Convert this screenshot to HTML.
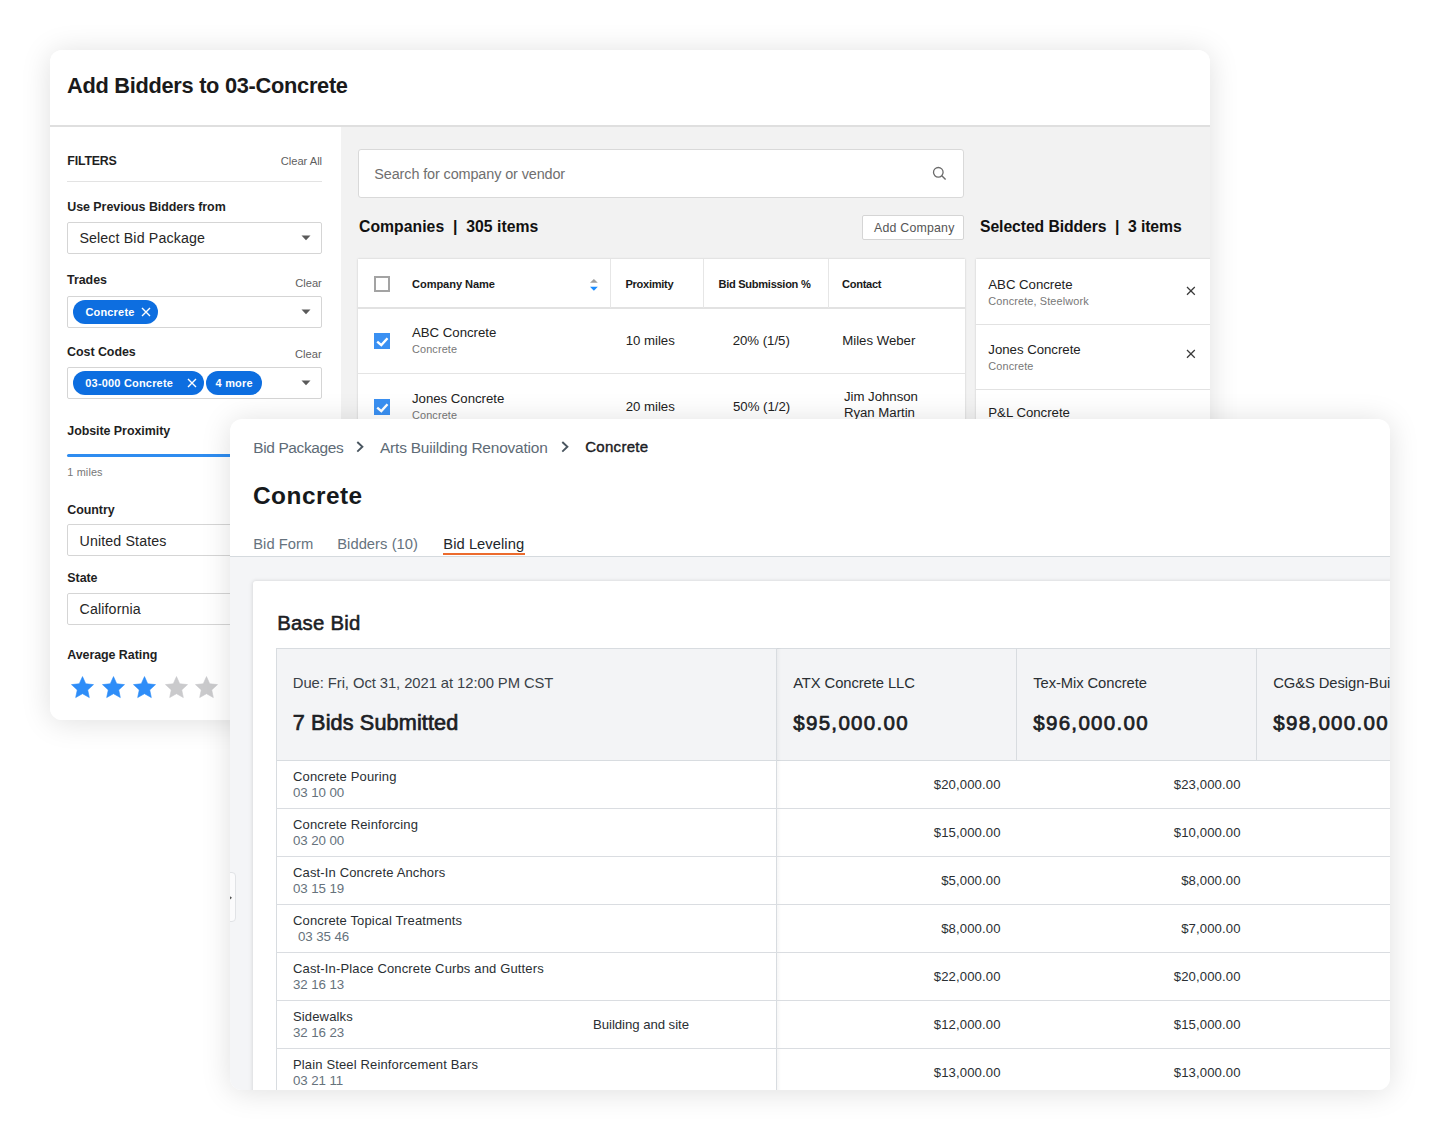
<!DOCTYPE html><html><head><meta charset="utf-8"><title>Bid Leveling</title><style>

*{margin:0;padding:0}
html,body{width:1440px;height:1140px;overflow:hidden;background:#fff}
body{position:relative;font-family:"Liberation Sans",sans-serif}
.panel{position:absolute;background:#fff;border-radius:12px;overflow:hidden}
.b{position:absolute;display:block}
.t{position:absolute;white-space:pre;line-height:1}

.h1{font-size:21.8px;letter-spacing:-0.29px;font-weight:700;color:#1a1a1a;}
.filt{font-size:12.41px;letter-spacing:-0.201px;font-weight:700;color:#1f1f1f;}
.clr{font-size:11.15px;letter-spacing:-0.013px;font-weight:400;color:#5f5f5f;}
.lbl{font-size:12.46px;letter-spacing:-0.06px;font-weight:700;color:#1f1f1f;}
.inp{font-size:14.22px;letter-spacing:0.129px;font-weight:400;color:#262626;}
.chip{font-size:10.98px;letter-spacing:0.203px;font-weight:700;color:#ffffff;}
.sect{font-size:15.75px;letter-spacing:-0.084px;font-weight:700;color:#111111;}
.srch{font-size:14.43px;letter-spacing:-0.116px;font-weight:400;color:#6f6f6f;}
.th{font-size:11.09px;letter-spacing:-0.294px;font-weight:700;color:#1a1a1a;}
.td{font-size:13.23px;letter-spacing:-0.019px;font-weight:400;color:#222222;}
.sub{font-size:10.88px;letter-spacing:0.134px;font-weight:400;color:#777777;}
.btn{font-size:12.35px;letter-spacing:0.214px;font-weight:400;color:#555555;}
.bc{font-size:15.47px;letter-spacing:-0.212px;font-weight:400;color:#5e6b76;}
.bca{font-size:15.03px;letter-spacing:0.29px;font-weight:400;color:#1c2024;}
.h2{font-size:24.4px;letter-spacing:0.492px;font-weight:700;color:#16191c;}
.tab{font-size:14.75px;letter-spacing:0.041px;font-weight:400;color:#66737e;}
.h3{font-size:20.35px;letter-spacing:0.219px;font-weight:400;color:#1c2024;-webkit-text-stroke:0.55px #1c2024;}
.due{font-size:14.8px;letter-spacing:-0.07px;font-weight:400;color:#3a4147;}
.big{font-size:21.64px;letter-spacing:0.135px;font-weight:400;color:#1c2024;-webkit-text-stroke:0.7px #1c2024;}
.bigm{font-size:20.53px;letter-spacing:1.317px;font-weight:400;color:#1c2024;-webkit-text-stroke:0.7px #1c2024;}
.vend{font-size:14.79px;letter-spacing:-0.084px;font-weight:400;color:#2a2f33;}
.row{font-size:13.01px;letter-spacing:0.147px;font-weight:400;color:#2a2f33;}
.code{font-size:13.33px;letter-spacing:-0.099px;font-weight:400;color:#66727c;}
.amt{font-size:13.13px;letter-spacing:0.116px;font-weight:400;color:#2a2f33;}
</style></head><body>
<div class="shadow" style="position:absolute;left:50px;top:50px;width:1160px;height:670px;border-radius:12px;box-shadow:0 2px 30px rgba(0,0,0,0.13)"></div>
<div class="panel" style="left:50px;top:50px;width:1160px;height:670px;z-index:1">
<div class="b" style="left:0.00px;top:75.20px;width:1160.00px;height:2.20px;background:#dfdfdf"></div>
<div class="b" style="left:290.50px;top:77.00px;width:870.00px;height:600.00px;background:#f2f2f2"></div>
<div class="t h1" style="left:17.00px;top:24.94px;">Add Bidders to 03-Concrete</div>
<div class="t filt" style="left:17.30px;top:104.59px;">FILTERS</div>
<div class="t clr" style="right:887.91px;top:105.66px;">Clear All</div>
<div class="b" style="left:17.00px;top:131.00px;width:255.00px;height:1.00px;background:#e3e3e3"></div>
<div class="t lbl" style="left:17.30px;top:151.45px;">Use Previous Bidders from</div>
<div class="b" style="left:17.00px;top:172.00px;width:255.00px;height:32.00px;background:#fff;border:1px solid #d5d5d5;border-radius:2px;box-sizing:border-box"></div>
<svg class="b" style="left:251.00px;top:185.00px;" width="10" height="6" viewBox="0 0 10 6"><path d="M0.5 0.5 L9.5 0.5 L5 5.2 Z" fill="#5a5a5a"/></svg>
<div class="t inp" style="left:29.40px;top:181.36px;">Select Bid Package</div>
<div class="t lbl" style="left:17.10px;top:224.45px;">Trades</div>
<div class="t clr" style="right:888.21px;top:228.26px;">Clear</div>
<div class="b" style="left:17.00px;top:245.50px;width:255.00px;height:32.00px;background:#fff;border:1px solid #d5d5d5;border-radius:2px;box-sizing:border-box"></div>
<svg class="b" style="left:251.00px;top:258.50px;" width="10" height="6" viewBox="0 0 10 6"><path d="M0.5 0.5 L9.5 0.5 L5 5.2 Z" fill="#5a5a5a"/></svg>
<div class="b" style="left:23.00px;top:249.50px;width:85.00px;height:24.00px;background:#0d6ee0;border-radius:12px"></div>
<div class="t chip" style="left:35.40px;top:256.70px;">Concrete</div>
<svg class="b" style="left:90.50px;top:256.50px;" width="10" height="10" viewBox="0 0 10 10"><path d="M1 1 L9 9 M9 1 L1 9" stroke="#fff" stroke-width="1.4"/></svg>
<div class="t lbl" style="left:17.10px;top:296.35px;">Cost Codes</div>
<div class="t clr" style="right:888.41px;top:299.36px;">Clear</div>
<div class="b" style="left:17.00px;top:317.00px;width:255.00px;height:32.00px;background:#fff;border:1px solid #d5d5d5;border-radius:2px;box-sizing:border-box"></div>
<svg class="b" style="left:251.00px;top:330.00px;" width="10" height="6" viewBox="0 0 10 6"><path d="M0.5 0.5 L9.5 0.5 L5 5.2 Z" fill="#5a5a5a"/></svg>
<div class="b" style="left:23.00px;top:321.00px;width:130.50px;height:24.00px;background:#0d6ee0;border-radius:12px"></div>
<div class="t chip" style="left:35.30px;top:328.20px;">03-000 Concrete</div>
<svg class="b" style="left:136.70px;top:328.00px;" width="10" height="10" viewBox="0 0 10 10"><path d="M1 1 L9 9 M9 1 L1 9" stroke="#fff" stroke-width="1.4"/></svg>
<div class="b" style="left:156.00px;top:321.00px;width:56.00px;height:24.00px;background:#0d6ee0;border-radius:12px"></div>
<div class="t chip" style="left:165.60px;top:328.20px;">4 more</div>
<div class="t lbl" style="left:17.30px;top:374.65px;">Jobsite Proximity</div>
<div class="b" style="left:17.00px;top:403.50px;width:260.00px;height:3.50px;background:#2e8cf0;border-radius:2px"></div>
<div class="t sub" style="left:17.30px;top:416.99px;">1 miles</div>
<div class="t lbl" style="left:17.30px;top:453.65px;">Country</div>
<div class="b" style="left:17.00px;top:474.30px;width:255.00px;height:32.20px;background:#fff;border:1px solid #d5d5d5;border-radius:2px;box-sizing:border-box"></div>
<div class="t inp" style="left:29.50px;top:483.76px;">United States</div>
<div class="t lbl" style="left:17.30px;top:521.85px;">State</div>
<div class="b" style="left:17.00px;top:543.20px;width:255.00px;height:32.00px;background:#fff;border:1px solid #d5d5d5;border-radius:2px;box-sizing:border-box"></div>
<div class="t inp" style="left:29.50px;top:552.16px;">California</div>
<div class="t lbl" style="left:17.20px;top:598.85px;">Average Rating</div>
<svg class="b" style="left:20.70px;top:626.10px;" width="23" height="23" viewBox="0 0 23 23"><path d="M11.50 0.60 L14.73 7.75 L22.53 8.62 L16.73 13.90 L18.32 21.58 L11.50 17.70 L4.68 21.58 L6.27 13.90 L0.47 8.62 L8.27 7.75 Z" fill="#2e8df8" stroke="#2e8df8" stroke-width="0.6" stroke-linejoin="round"/></svg>
<svg class="b" style="left:52.20px;top:626.10px;" width="23" height="23" viewBox="0 0 23 23"><path d="M11.50 0.60 L14.73 7.75 L22.53 8.62 L16.73 13.90 L18.32 21.58 L11.50 17.70 L4.68 21.58 L6.27 13.90 L0.47 8.62 L8.27 7.75 Z" fill="#2e8df8" stroke="#2e8df8" stroke-width="0.6" stroke-linejoin="round"/></svg>
<svg class="b" style="left:82.90px;top:626.10px;" width="23" height="23" viewBox="0 0 23 23"><path d="M11.50 0.60 L14.73 7.75 L22.53 8.62 L16.73 13.90 L18.32 21.58 L11.50 17.70 L4.68 21.58 L6.27 13.90 L0.47 8.62 L8.27 7.75 Z" fill="#2e8df8" stroke="#2e8df8" stroke-width="0.6" stroke-linejoin="round"/></svg>
<svg class="b" style="left:114.80px;top:626.10px;" width="23" height="23" viewBox="0 0 23 23"><path d="M11.50 0.60 L14.73 7.75 L22.53 8.62 L16.73 13.90 L18.32 21.58 L11.50 17.70 L4.68 21.58 L6.27 13.90 L0.47 8.62 L8.27 7.75 Z" fill="#cacacc" stroke="#cacacc" stroke-width="0.6" stroke-linejoin="round"/></svg>
<svg class="b" style="left:145.20px;top:626.10px;" width="23" height="23" viewBox="0 0 23 23"><path d="M11.50 0.60 L14.73 7.75 L22.53 8.62 L16.73 13.90 L18.32 21.58 L11.50 17.70 L4.68 21.58 L6.27 13.90 L0.47 8.62 L8.27 7.75 Z" fill="#cacacc" stroke="#cacacc" stroke-width="0.6" stroke-linejoin="round"/></svg>
<div class="b" style="left:308.20px;top:99.30px;width:605.40px;height:48.60px;background:#fff;border:1px solid #d9d9d9;border-radius:3px;box-sizing:border-box"></div>
<div class="t srch" style="left:324.30px;top:116.68px;">Search for company or vendor</div>
<svg class="b" style="left:881.60px;top:116.30px;" width="15" height="15" viewBox="0 0 15 15"><circle cx="6.3" cy="6.3" r="4.8" fill="none" stroke="#6b6b6b" stroke-width="1.3"/><path d="M9.8 9.8 L13.6 13.6" stroke="#6b6b6b" stroke-width="1.4"/></svg>
<div class="t sect" style="left:309.00px;top:169.06px;letter-spacing:0.03px">Companies  |  305 items</div>
<div class="b" style="left:811.60px;top:165.30px;width:102.40px;height:24.40px;background:#fff;border:1px solid #d5d5d5;border-radius:2px;box-sizing:border-box"></div>
<div class="t btn" style="left:824.00px;top:172.14px;">Add Company</div>
<div class="t sect" style="left:930.00px;top:168.76px;">Selected Bidders  |  3 items</div>
<div class="b" style="left:308.30px;top:209.20px;width:607.00px;height:470.00px;background:#fff;box-shadow:0 0 2px rgba(0,0,0,0.18)"></div>
<div class="b" style="left:308.30px;top:257.20px;width:607.00px;height:1.50px;background:#e2e2e2"></div>
<div class="b" style="left:308.30px;top:322.60px;width:607.00px;height:1.20px;background:#e4e4e4"></div>
<div class="b" style="left:308.30px;top:387.60px;width:607.00px;height:1.20px;background:#e4e4e4"></div>
<div class="b" style="left:560.30px;top:209.20px;width:1.20px;height:48.50px;background:#e6e6e6"></div>
<div class="b" style="left:653.30px;top:209.20px;width:1.20px;height:48.50px;background:#e6e6e6"></div>
<div class="b" style="left:778.30px;top:209.20px;width:1.20px;height:48.50px;background:#e6e6e6"></div>
<div class="b" style="left:324.30px;top:226.20px;width:16.20px;height:15.60px;border:2px solid #a3a3a3;box-sizing:border-box;background:#fff"></div>
<div class="t th" style="left:362.00px;top:229.21px;letter-spacing:-0.07px">Company Name</div>
<svg class="b" style="left:539.00px;top:228.00px;" width="10" height="14" viewBox="0 0 10 14"><path d="M1 4.8 L4.9 1 L8.8 4.8 Z" fill="#9e9e9e"/><path d="M1 8.8 L4.9 12.8 L8.8 8.8 Z" fill="#1a8cff"/></svg>
<div class="t th" style="left:575.50px;top:229.21px;">Proximity</div>
<div class="t th" style="left:668.50px;top:229.21px;">Bid Submission %</div>
<div class="t th" style="left:792.00px;top:229.21px;">Contact</div>
<div class="b" style="left:324.30px;top:283.00px;width:16.20px;height:16.00px;background:#3a90f2"></div>
<svg class="b" style="left:324.30px;top:283.00px;" width="16" height="16" viewBox="0 0 16 16"><path d="M3.2 8.6 L7.3 12.1 L13.5 5.3" fill="none" stroke="#fff" stroke-width="2.4"/></svg>
<div class="t td" style="left:362.00px;top:276.20px;">ABC Concrete</div>
<div class="t sub" style="left:362.00px;top:294.49px;">Concrete</div>
<div class="t td" style="left:575.70px;top:284.20px;">10 miles</div>
<div class="t td" style="left:682.70px;top:284.40px;">20% (1/5)</div>
<div class="t td" style="left:792.30px;top:284.20px;">Miles Weber</div>
<div class="b" style="left:324.30px;top:348.50px;width:16.20px;height:16.00px;background:#3a90f2"></div>
<svg class="b" style="left:324.30px;top:348.50px;" width="16" height="16" viewBox="0 0 16 16"><path d="M3.2 8.6 L7.3 12.1 L13.5 5.3" fill="none" stroke="#fff" stroke-width="2.4"/></svg>
<div class="t td" style="left:362.00px;top:341.70px;">Jones Concrete</div>
<div class="t sub" style="left:362.00px;top:359.69px;">Concrete</div>
<div class="t td" style="left:575.70px;top:349.70px;">20 miles</div>
<div class="t td" style="left:683.00px;top:349.90px;">50% (1/2)</div>
<div class="t td" style="left:793.90px;top:340.20px;">Jim Johnson</div>
<div class="t td" style="left:793.90px;top:356.30px;">Ryan Martin</div>
<div class="b" style="left:925.80px;top:209.00px;width:300.00px;height:470.00px;background:#fff;box-shadow:0 0 2px rgba(0,0,0,0.18)"></div>
<div class="b" style="left:925.80px;top:273.50px;width:300.00px;height:1.30px;background:#e2e2e2"></div>
<div class="b" style="left:925.80px;top:338.60px;width:300.00px;height:1.30px;background:#e2e2e2"></div>
<div class="t td" style="left:938.30px;top:228.40px;">ABC Concrete</div>
<div class="t sub" style="left:938.30px;top:246.49px;">Concrete, Steelwork</div>
<svg class="b" style="left:1136.30px;top:235.90px;" width="9.8" height="9.8" viewBox="0 0 9.8 9.8"><path d="M1 1 L8.8 8.8 M8.8 1 L1 8.8" stroke="#3a3a3a" stroke-width="1.25"/></svg>
<div class="t td" style="left:938.30px;top:292.90px;">Jones Concrete</div>
<div class="t sub" style="left:938.30px;top:311.19px;">Concrete</div>
<svg class="b" style="left:1136.30px;top:299.40px;" width="9.8" height="9.8" viewBox="0 0 9.8 9.8"><path d="M1 1 L8.8 8.8 M8.8 1 L1 8.8" stroke="#3a3a3a" stroke-width="1.25"/></svg>
<div class="t td" style="left:938.30px;top:356.10px;">P&amp;L Concrete</div>
<svg class="b" style="left:1136.10px;top:368.60px;" width="9.8" height="9.8" viewBox="0 0 9.8 9.8"><path d="M1 1 L8.8 8.8 M8.8 1 L1 8.8" stroke="#3a3a3a" stroke-width="1.25"/></svg>
</div>
<div class="panel" style="left:230px;top:419px;width:1160px;height:671px;z-index:2;box-shadow:0 2px 30px rgba(0,0,0,0.13)">
<div class="t bc" style="left:23.20px;top:20.80px;letter-spacing:-0.36px">Bid Packages</div>
<svg class="b" style="left:126.00px;top:22.00px;" width="8" height="12" viewBox="0 0 8 12"><path d="M1.3 1 L6.4 5.8 L1.3 10.6" fill="none" stroke="#4a5660" stroke-width="1.9"/></svg>
<div class="t bc" style="left:150.00px;top:20.80px;">Arts Buiilding Renovation</div>
<svg class="b" style="left:330.80px;top:22.00px;" width="8" height="12" viewBox="0 0 8 12"><path d="M1.3 1 L6.4 5.8 L1.3 10.6" fill="none" stroke="#4a5660" stroke-width="1.9"/></svg>
<div class="t bca" style="left:355.20px;top:20.17px;-webkit-text-stroke:0.4px #1c2024">Concrete</div>
<div class="t h2" style="left:23.00px;top:64.54px;">Concrete</div>
<div class="t tab" style="left:23.20px;top:117.91px;">Bid Form</div>
<div class="t tab" style="left:107.20px;top:117.91px;">Bidders (10)</div>
<div class="t tab" style="left:213.30px;top:117.91px;color:#22272b;">Bid Leveling</div>
<div class="b" style="left:213.00px;top:134.30px;width:82.00px;height:2.00px;background:#ec6b2d"></div>
<div class="b" style="left:0.00px;top:136.50px;width:1160.00px;height:1.30px;background:#d5dade"></div>
<div class="b" style="left:0.00px;top:137.80px;width:1160.00px;height:540.00px;background:#f4f5f7"></div>
<div class="b" style="left:-4.00px;top:453.00px;width:10.00px;height:50.00px;background:#fbfbfc;border:1px solid #e1e3e6;border-radius:4px;box-sizing:border-box"></div>
<svg class="b" style="left:0.00px;top:477.30px;" width="3" height="4" viewBox="0 0 3 4"><path d="M0 0.2 L2 1.8 L0 3.4 Z" fill="#555"/></svg>
<div class="b" style="left:22.80px;top:161.80px;width:1200.00px;height:600.00px;background:#fff;box-shadow:-1px 0 4px rgba(0,0,0,0.09), 0 -1px 3px rgba(0,0,0,0.04);border-radius:3px"></div>
<div class="t h3" style="left:47.30px;top:194.27px;">Base Bid</div>
<div class="b" style="left:46.00px;top:229.00px;width:1200.00px;height:113.00px;background:#f3f4f6;border:1px solid #d8dce0;box-sizing:border-box"></div>
<div class="b" style="left:546.00px;top:229.00px;width:1.00px;height:112.00px;background:#d8dce0"></div>
<div class="b" style="left:786.00px;top:229.00px;width:1.00px;height:112.00px;background:#d8dce0"></div>
<div class="b" style="left:1026.00px;top:229.00px;width:1.00px;height:112.00px;background:#d8dce0"></div>
<div class="b" style="left:546.00px;top:341.00px;width:1.00px;height:340.00px;background:#d8dce0"></div>
<div class="b" style="left:547.00px;top:229.00px;width:4.00px;height:450.00px;background:linear-gradient(90deg,rgba(0,0,0,0.035),rgba(0,0,0,0))"></div>
<div class="b" style="left:46.00px;top:341.00px;width:1.00px;height:340.00px;background:#d8dce0"></div>
<div class="t due" style="left:62.80px;top:257.47px;">Due: Fri, Oct 31, 2021 at 12:00 PM CST</div>
<div class="t big" style="left:62.80px;top:293.28px;">7 Bids Submitted</div>
<div class="t vend" style="left:563.20px;top:257.18px;">ATX Concrete LLC</div>
<div class="t bigm" style="left:563.20px;top:294.12px;">$95,000.00</div>
<div class="t vend" style="left:803.20px;top:257.18px;">Tex-Mix Concrete</div>
<div class="t bigm" style="left:803.20px;top:294.12px;">$96,000.00</div>
<div class="t vend" style="left:1043.20px;top:257.18px;">CG&amp;S Design-Build</div>
<div class="t bigm" style="left:1043.20px;top:294.12px;">$98,000.00</div>
<div class="t row" style="left:63.00px;top:351.18px;">Concrete Pouring</div>
<div class="t code" style="left:63.00px;top:367.31px;">03 10 00</div>
<div class="t amt" style="right:389.38px;top:358.78px;">$20,000.00</div>
<div class="t amt" style="right:149.38px;top:358.78px;">$23,000.00</div>
<div class="b" style="left:46.30px;top:389.00px;width:1200.00px;height:1.00px;background:#dadde1"></div>
<div class="t row" style="left:63.00px;top:399.18px;">Concrete Reinforcing</div>
<div class="t code" style="left:63.00px;top:415.31px;">03 20 00</div>
<div class="t amt" style="right:389.38px;top:406.78px;">$15,000.00</div>
<div class="t amt" style="right:149.38px;top:406.78px;">$10,000.00</div>
<div class="b" style="left:46.30px;top:437.00px;width:1200.00px;height:1.00px;background:#dadde1"></div>
<div class="t row" style="left:63.00px;top:447.18px;">Cast-In Concrete Anchors</div>
<div class="t code" style="left:63.00px;top:463.31px;">03 15 19</div>
<div class="t amt" style="right:389.38px;top:454.78px;">$5,000.00</div>
<div class="t amt" style="right:149.38px;top:454.78px;">$8,000.00</div>
<div class="b" style="left:46.30px;top:485.00px;width:1200.00px;height:1.00px;background:#dadde1"></div>
<div class="t row" style="left:63.00px;top:495.18px;">Concrete Topical Treatments</div>
<div class="t code" style="left:68.00px;top:511.31px;">03 35 46</div>
<div class="t amt" style="right:389.38px;top:502.78px;">$8,000.00</div>
<div class="t amt" style="right:149.38px;top:502.78px;">$7,000.00</div>
<div class="b" style="left:46.30px;top:533.00px;width:1200.00px;height:1.00px;background:#dadde1"></div>
<div class="t row" style="left:63.00px;top:543.18px;">Cast-In-Place Concrete Curbs and Gutters</div>
<div class="t code" style="left:63.00px;top:559.31px;">32 16 13</div>
<div class="t amt" style="right:389.38px;top:550.78px;">$22,000.00</div>
<div class="t amt" style="right:149.38px;top:550.78px;">$20,000.00</div>
<div class="b" style="left:46.30px;top:581.00px;width:1200.00px;height:1.00px;background:#dadde1"></div>
<div class="t row" style="left:63.00px;top:591.18px;">Sidewalks</div>
<div class="t code" style="left:63.00px;top:607.31px;">32 16 23</div>
<div class="t vend" style="left:363.00px;top:598.88px;font-size:13.2px;letter-spacing:-0.05px">Building and site</div>
<div class="t amt" style="right:389.38px;top:598.78px;">$12,000.00</div>
<div class="t amt" style="right:149.38px;top:598.78px;">$15,000.00</div>
<div class="b" style="left:46.30px;top:629.00px;width:1200.00px;height:1.00px;background:#dadde1"></div>
<div class="t row" style="left:63.00px;top:639.18px;">Plain Steel Reinforcement Bars</div>
<div class="t code" style="left:63.00px;top:655.31px;">03 21 11</div>
<div class="t amt" style="right:389.38px;top:646.78px;">$13,000.00</div>
<div class="t amt" style="right:149.38px;top:646.78px;">$13,000.00</div>
</div></body></html>
